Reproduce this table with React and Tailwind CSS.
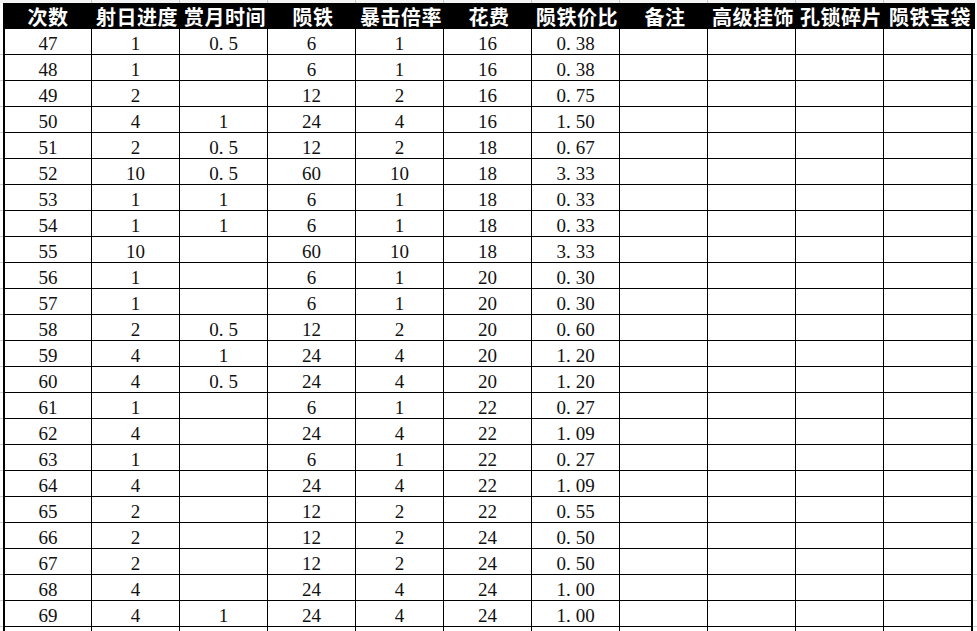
import React from 'react';

// 陨铁消耗表：次数 47–69
const headers = ['次数', '射日进度', '赏月时间', '陨铁', '暴击倍率', '花费', '陨铁价比', '备注', '高级挂饰', '孔锁碎片', '陨铁宝袋'];

const rows = [
  [47, 1, '0.5', 6, 1, 16, '0.38'],
  [48, 1, '', 6, 1, 16, '0.38'],
  [49, 2, '', 12, 2, 16, '0.75'],
  [50, 4, '1', 24, 4, 16, '1.50'],
  [51, 2, '0.5', 12, 2, 18, '0.67'],
  [52, 10, '0.5', 60, 10, 18, '3.33'],
  [53, 1, '1', 6, 1, 18, '0.33'],
  [54, 1, '1', 6, 1, 18, '0.33'],
  [55, 10, '', 60, 10, 18, '3.33'],
  [56, 1, '', 6, 1, 20, '0.30'],
  [57, 1, '', 6, 1, 20, '0.30'],
  [58, 2, '0.5', 12, 2, 20, '0.60'],
  [59, 4, '1', 24, 4, 20, '1.20'],
  [60, 4, '0.5', 24, 4, 20, '1.20'],
  [61, 1, '', 6, 1, 22, '0.27'],
  [62, 4, '', 24, 4, 22, '1.09'],
  [63, 1, '', 6, 1, 22, '0.27'],
  [64, 4, '', 24, 4, 22, '1.09'],
  [65, 2, '', 12, 2, 22, '0.55'],
  [66, 2, '', 12, 2, 24, '0.50'],
  [67, 2, '', 12, 2, 24, '0.50'],
  [68, 4, '', 24, 4, 24, '1.00'],
  [69, 4, '1', 24, 4, 24, '1.00'],
];

const cjk = { fontFamily: '"Noto Sans CJK SC", "Noto Sans", sans-serif' };
const serif = { fontFamily: '"Liberation Serif", "DejaVu Serif", serif' };

// 小数点在原表里占半个字宽
function Num({ v }) {
  const s = String(v);
  const dot = s.indexOf('.');
  if (dot < 0) return s;
  return (
    <>
      {s.slice(0, dot)}
      <span className="mr-[5px]">.</span>
      {s.slice(dot + 1)}
    </>
  );
}

function DataRow({ cells }) {
  const full = [...cells, '', '', '', ''];
  return (
    <div className="flex h-[26px]">
      <div className="w-[3px] shrink-0 border-b border-[#d0d0d0]" />
      <div className="flex border-x-2 border-black">
        {full.map((c, i) => (
          <div
            key={i}
            className={`flex h-[26px] items-center justify-center border-b-[1.5px] border-black pt-[4px] text-[19px] leading-none text-[#111] ${
              i === 0 ? 'w-[86px]' : 'w-[88px] border-l-[1.5px]'
            }`}
            style={serif}
          >
            <Num v={c} />
          </div>
        ))}
      </div>
      <div className="flex-1 border-b border-[#d0d0d0]" />
    </div>
  );
}

export default function App() {
  return (
    <div className="h-[631px] w-[977px] overflow-hidden bg-white">
      {/* strip of the row above */}
      <div className="flex h-[3px] bg-[#f4f4f4]">
        <div className="w-[3px]" />
        {headers.map((h, i) => (
          <div key={h} className={`w-[88px] ${i === 0 ? '' : 'border-l border-[#c8c8c8]'}`} />
        ))}
      </div>

      {/* header */}
      <div className="flex h-[26px]">
        <div className="w-[3px] shrink-0" />
        <div className="flex bg-black">
          {headers.map((h, i) => (
            <div
              key={h}
              className={`flex h-[26px] items-center justify-center pt-[1px] text-[20px] font-bold leading-none tracking-[0.5px] text-white ${
                i === 0 ? 'w-[90px]' : i === headers.length - 1 ? 'w-[90px]' : 'w-[88px]'
              }`}
              style={cjk}
            >
              {h}
            </div>
          ))}
        </div>
      </div>

      {rows.map((r) => (
        <DataRow key={r[0]} cells={r} />
      ))}
      <DataRow cells={['', '', '', '', '', '', '']} />
    </div>
  );
}
